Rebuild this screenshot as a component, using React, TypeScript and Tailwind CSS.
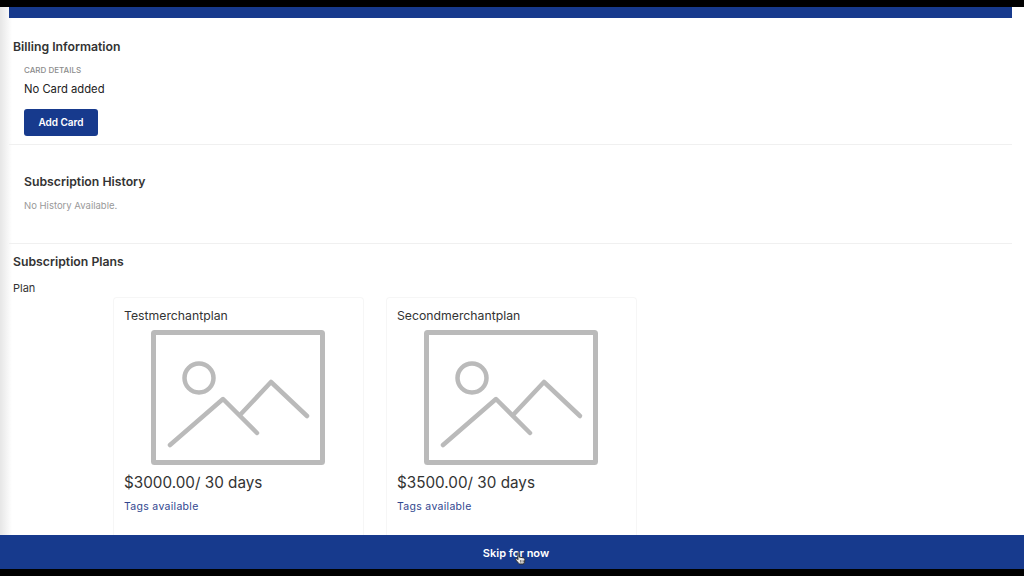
const font = "font-['Inter','Liberation_Sans',sans-serif]";

function ImagePlaceholder() {
  return (
    <svg viewBox="0 0 174 135" className="h-[135px] w-[174px]" fill="none" stroke="#bababa" strokeWidth="5">
      <rect x="2.5" y="2.5" width="169" height="130" rx="1" />
      <circle cx="48" cy="48" r="14.5" strokeWidth="4.5" />
      <path d="M19 115 L72 69 L106 103" strokeLinecap="round" strokeLinejoin="round" strokeWidth="4.5" />
      <path d="M89 85 L120 52 L156 86" strokeLinecap="round" strokeLinejoin="round" strokeWidth="4.5" />
    </svg>
  );
}

function PlanCard({ name, price }: { name: string; price: string }) {
  return (
    <div className="h-[238px] w-[251px] rounded-t border border-b-0 border-[#f6f6f6] bg-white pl-[10px] pt-[10px]">
      <p className="text-[12.25px] leading-[16px] text-[#333]">{name}</p>
      <div className="ml-[27px] mt-[6px]">
        <ImagePlaceholder />
      </div>
      <p className="mt-[8px] text-[15.25px] leading-[20px] text-[#333]">{price}</p>
      <p className="mt-[7px] text-[10.5px] leading-[14px] tracking-[0.3px] text-[#31478f]">Tags available</p>
    </div>
  );
}

export default function App() {
  return (
    <div className={`${font} relative flex h-[576px] w-[1024px] flex-col overflow-hidden bg-white`}>
      <div className="h-[7px] shrink-0 bg-black" />
      {/* faded edge of the page behind */}
      <div className="absolute bottom-[41px] left-0 top-[7px] w-[12px] bg-gradient-to-r from-[#e6e6e6] to-white" />

      <div className="relative flex min-h-0 flex-1 flex-col pl-[9px] pr-[12px]">
        <div className="h-[11px] shrink-0 bg-[#173a8d]" />

        <section className="h-[127px] shrink-0 border-b border-[#f0f0f0] pt-[21px]">
          <h2 className="pl-[4px] text-[12.25px] font-semibold leading-[16px] text-[#333]">Billing Information</h2>
          <div className="pl-[15px]">
            <p className="mt-[10px] text-[8px] font-medium leading-[11px] text-[#8c8c8c]">CARD DETAILS</p>
            <p className="mt-[6px] text-[11.25px] leading-[15px] text-[#222]">No Card added</p>
            <button className="mt-[12px] h-[27px] w-[74px] rounded-[3px] bg-[#173a8d] text-[10px] font-semibold text-white">
              Add Card
            </button>
          </div>
        </section>

        <section className="h-[99px] shrink-0 border-b border-[#f0f0f0] pl-[15px] pt-[29px]">
          <h2 className="text-[12.25px] font-semibold leading-[16px] text-[#333]">Subscription History</h2>
          <p className="mt-[9px] text-[9.5px] leading-[13px] text-[#999]">No History Available.</p>
        </section>

        <section className="min-h-0 flex-1 pt-[10px]">
          <h2 className="pl-[4px] text-[12.25px] font-semibold leading-[16px] text-[#333]">Subscription Plans</h2>
          <p className="mt-[11px] pl-[4px] text-[11px] leading-[14px] text-[#333]">Plan</p>
          <div className="ml-[104px] mt-[2px] flex gap-[22px]">
            <PlanCard name="Testmerchantplan" price="$3000.00/ 30 days" />
            <PlanCard name="Secondmerchantplan" price="$3500.00/ 30 days" />
          </div>
        </section>
      </div>

      <button className="relative flex h-[34px] w-full shrink-0 items-center justify-center bg-[#173a8d] pl-[8px] pt-[2px] text-[11px] font-semibold text-white">
        Skip for now
        <svg viewBox="0 0 12 14" className="absolute left-[515px] top-[16px] h-[15px] w-[12px]">
          <path
            d="M3 1.2c.7 0 1.1.5 1.1 1.1v3.2l4.4.9c.9.2 1.4.8 1.4 1.7l-.4 3c-.1.8-.7 1.400-1.500 1.400H5c-.5 0-1-.2-1.300-.6L1 8.700c-.4-.5-.3-1.100.1-1.400.4-.3.9-.3 1.300.1l.5.6V2.300C1.900 1.700 2.300 1.200 3 1.200z"
            fill="#e8e8e8"
            stroke="#2a2a2a"
            strokeWidth="1"
          />
          <path d="M5.500 8.500v2.600M7 8.700v2.400M8.500 8.900v2.200" stroke="#555" strokeWidth="0.7" fill="none" />
        </svg>
      </button>
      <div className="h-[7px] shrink-0 bg-black" />
    </div>
  );
}
